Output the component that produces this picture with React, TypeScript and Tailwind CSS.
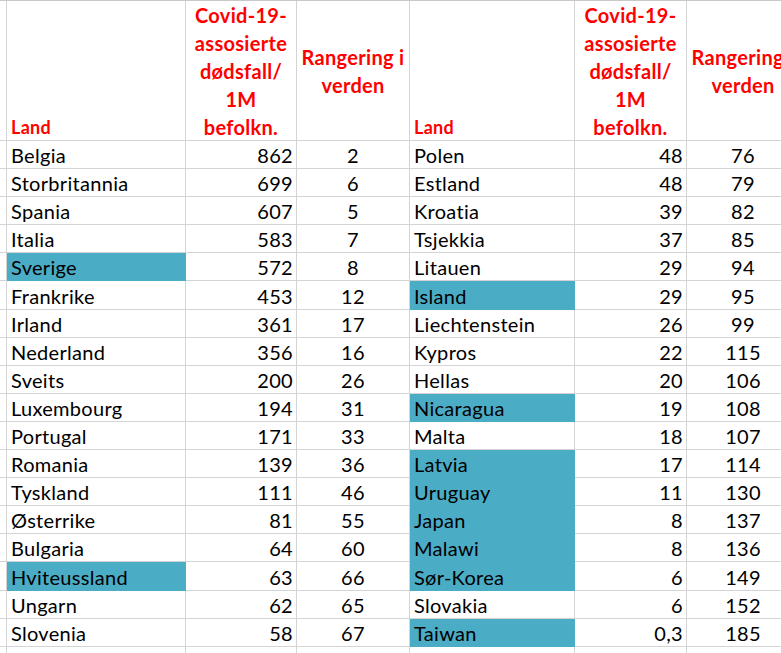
import React from "react";

type Row = { land: string; d: string; r: string; hl?: boolean };

const left: Row[] = [
  { land: "Belgia", d: "862", r: "2" },
  { land: "Storbritannia", d: "699", r: "6" },
  { land: "Spania", d: "607", r: "5" },
  { land: "Italia", d: "583", r: "7" },
  { land: "Sverige", d: "572", r: "8", hl: true },
  { land: "Frankrike", d: "453", r: "12" },
  { land: "Irland", d: "361", r: "17" },
  { land: "Nederland", d: "356", r: "16" },
  { land: "Sveits", d: "200", r: "26" },
  { land: "Luxembourg", d: "194", r: "31" },
  { land: "Portugal", d: "171", r: "33" },
  { land: "Romania", d: "139", r: "36" },
  { land: "Tyskland", d: "111", r: "46" },
  { land: "Østerrike", d: "81", r: "55" },
  { land: "Bulgaria", d: "64", r: "60" },
  { land: "Hviteussland", d: "63", r: "66", hl: true },
  { land: "Ungarn", d: "62", r: "65" },
  { land: "Slovenia", d: "58", r: "67" },
  { land: "", d: "", r: "" },
];

const right: Row[] = [
  { land: "Polen", d: "48", r: "76" },
  { land: "Estland", d: "48", r: "79" },
  { land: "Kroatia", d: "39", r: "82" },
  { land: "Tsjekkia", d: "37", r: "85" },
  { land: "Litauen", d: "29", r: "94" },
  { land: "Island", d: "29", r: "95", hl: true },
  { land: "Liechtenstein", d: "26", r: "99" },
  { land: "Kypros", d: "22", r: "115" },
  { land: "Hellas", d: "20", r: "106" },
  { land: "Nicaragua", d: "19", r: "108", hl: true },
  { land: "Malta", d: "18", r: "107" },
  { land: "Latvia", d: "17", r: "114", hl: true },
  { land: "Uruguay", d: "11", r: "130", hl: true },
  { land: "Japan", d: "8", r: "137", hl: true },
  { land: "Malawi", d: "8", r: "136", hl: true },
  { land: "Sør-Korea", d: "6", r: "149", hl: true },
  { land: "Slovakia", d: "6", r: "152" },
  { land: "Taiwan", d: "0,3", r: "185", hl: true },
  { land: "", d: "", r: "" },
];

const base =
  "h-[28.1px] border-r border-b flex items-end pb-[3px] leading-none whitespace-nowrap overflow-hidden";
const cell = `${base} border-[#d4d4d4]`;
const hlCell = `${base} border-[#4bacc6] bg-[#4bacc6]`;

const landHead =
  "h-[140px] border-r border-b border-[#d4d4d4] flex items-end pl-[4px] pb-[4px] text-[18px] font-bold leading-none text-[#ff0000]";
const colHead =
  "h-[140px] border-r border-b border-[#d4d4d4] flex items-center justify-center text-center text-[20px] font-bold leading-[28px] tracking-[0.3px] text-[#ff0000] whitespace-nowrap overflow-hidden";

function DeathsHead() {
  return (
    <div className={colHead}>
      <div>
        Covid-19-
        <br />
        assosierte
        <br />
        dødsfall/
        <br />
        1M
        <br />
        befolkn.
      </div>
    </div>
  );
}

function RankHead() {
  return (
    <div className={colHead}>
      <div>
        Rangering i
        <br />
        verden
      </div>
    </div>
  );
}

export default function App() {
  return (
    <div
      className="w-[781px] h-[653px] overflow-hidden bg-white text-black"
      style={{ fontFamily: "Lato, 'Open Sans', sans-serif" }}
    >
      <div className="grid w-[800px] grid-cols-[7px_179px_111px_113px_165px_112px_113px] border-t border-[#c8c8c8] text-[20px] tracking-[0.3px]">
        <div className="h-[140px] border-r border-b border-[#d4d4d4]" />
        <div className={landHead}>Land</div>
        <DeathsHead />
        <RankHead />
        <div className={landHead}>Land</div>
        <DeathsHead />
        <RankHead />

        {left.map((l, i) => {
          const r = right[i];
          return (
            <React.Fragment key={i}>
              <div className={cell} />
              <div className={`${l.hl ? hlCell : cell} pl-[4px]`}>{l.land}</div>
              <div className={`${cell} justify-end pr-[3px]`}>{l.d}</div>
              <div className={`${cell} justify-center`}>{l.r}</div>
              <div className={`${r.hl ? hlCell : cell} pl-[4px]`}>{r.land}</div>
              <div className={`${cell} justify-end pr-[3px]`}>{r.d}</div>
              <div className={`${cell} justify-center`}>{r.r}</div>
            </React.Fragment>
          );
        })}
      </div>
    </div>
  );
}
